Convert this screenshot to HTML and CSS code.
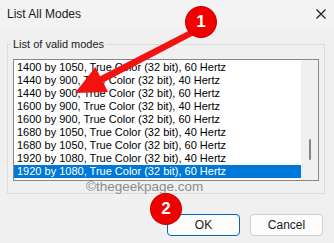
FILE: index.html
```html
<!DOCTYPE html>
<html lang="en">
<head>
    <meta charset="UTF-8">
    <title>List All Modes</title>
    <link rel="stylesheet" href="styles.css">
</head>
<body>

<div class="window">
    <!-- Заголовок окна -->
    <div class="titlebar">
        <span class="title">List All Modes</span>
        <svg class="close" width="10" height="10" viewBox="0 0 10 10">
            <path d="M0.5 0.5 L9.5 9.5 M9.5 0.5 L0.5 9.5" stroke="#1a1a1a" stroke-width="1.1" fill="none"/>
        </svg>
    </div>

    <fieldset class="group">
        <legend>List of valid modes</legend>
        <div class="listbox">
            <div class="rows">
                <div class="row">1400 by 1050, True Color (32 bit), 60 Hertz</div>
                <div class="row">1440 by 900, True Color (32 bit), 40 Hertz</div>
                <div class="row">1440 by 900, True Color (32 bit), 60 Hertz</div>
                <div class="row">1600 by 900, True Color (32 bit), 40 Hertz</div>
                <div class="row">1600 by 900, True Color (32 bit), 60 Hertz</div>
                <div class="row">1680 by 1050, True Color (32 bit), 40 Hertz</div>
                <div class="row">1680 by 1050, True Color (32 bit), 60 Hertz</div>
                <div class="row">1920 by 1080, True Color (32 bit), 40 Hertz</div>
                <div class="row selected">1920 by 1080, True Color (32 bit), 60 Hertz</div>
            </div>
            <div class="scrollbar"><div class="thumb"></div></div>
        </div>
        <div class="watermark">©thegeekpage.com</div>
    </fieldset>

    <div class="buttons">
        <button class="btn default">OK</button>
        <button class="btn">Cancel</button>
    </div>

    <!-- Аннотации поверх окна -->
    <svg class="arrow" width="334" height="243" viewBox="0 0 334 243">
        <polygon points="193.6,28.3 196.4,33.7 103.3,82.5 108,91.9 75,93 95.4,66.9 100.1,76.3" fill="#f21212"/>
    </svg>
    <div class="badge badge-1">1</div>
    <div class="badge badge-2">2</div>
</div>

</body>
</html>
```

FILE: styles.css
```css
body {
    margin: 0;
    background-color: #f0f0f0;
    font-family: "Liberation Sans", Arial, sans-serif;
    color: #1a1a1a;
}
.window {
    position: relative;
    width: 334px;
    height: 243px;
    overflow: hidden;
}
.titlebar {
    height: 27px;
    display: flex;
    align-items: center;
    justify-content: space-between;
    padding: 0 8px 0 7px;
    background-color: #f3f3f3;
    font-size: 12px;
}
.close {
    display: block;
    margin-top: 1px;
}
.group {
    margin: 11px 9px 0 7px;
    padding: 0 5px 0 5px;
    border: 1px solid #dcdcdc;
    min-width: 0;
}
.group legend {
    padding: 0 2px;
    margin-left: -2px;
    font-size: 11px;
    line-height: 13px;
    color: #1a1a1a;
}
.listbox {
    display: flex;
    margin-top: 8px;
    height: 122px;
    box-sizing: border-box;
    border: 1px solid #828790;
    background-color: #ffffff;
}
.rows {
    flex: 1;
    padding-top: 1px;
}
.row {
    height: 13px;
    line-height: 13px;
    padding-left: 3px;
    font-size: 11px;
    white-space: nowrap;
    overflow: hidden;
    color: #000;
}
.row.selected {
    background-color: #0078d7;
    color: #ffffff;
}
.scrollbar {
    width: 17px;
    background-color: #f0f0f0;
    display: flex;
    justify-content: center;
    padding-top: 79px;
    box-sizing: border-box;
}
.thumb {
    width: 2px;
    height: 21px;
    border-radius: 1px;
    background-color: #858585;
}
.watermark {
    height: 12px;
    line-height: 12px;
    padding-left: 73px;
    font-size: 13.5px;
    color: #8c8c8c;
    white-space: nowrap;
}
.buttons {
    display: flex;
    justify-content: flex-end;
    gap: 10px;
    margin: 20px 11px 0 0;
}
.btn {
    width: 73px;
    height: 22px;
    padding: 0;
    border: 1px solid #d0d0d0;
    border-radius: 4px;
    background-color: #fdfdfd;
    font-family: "Liberation Sans", Arial, sans-serif;
    font-size: 12px;
    color: #1a1a1a;
}
.btn.default {
    border-color: #0067c0;
}
.arrow {
    position: absolute;
    left: 0;
    top: 0;
}
.badge {
    position: absolute;
    width: 30px;
    height: 30px;
    border-radius: 50%;
    background-color: #f20000;
    box-shadow: 0 0 0 1px #c80000;
    color: #ffffff;
    font-size: 17px;
    font-weight: bold;
    line-height: 30px;
    text-align: center;
}
.badge-1 {
    left: 186px;
    top: 7px;
}
.badge-2 {
    left: 151px;
    top: 194px;
}
```
